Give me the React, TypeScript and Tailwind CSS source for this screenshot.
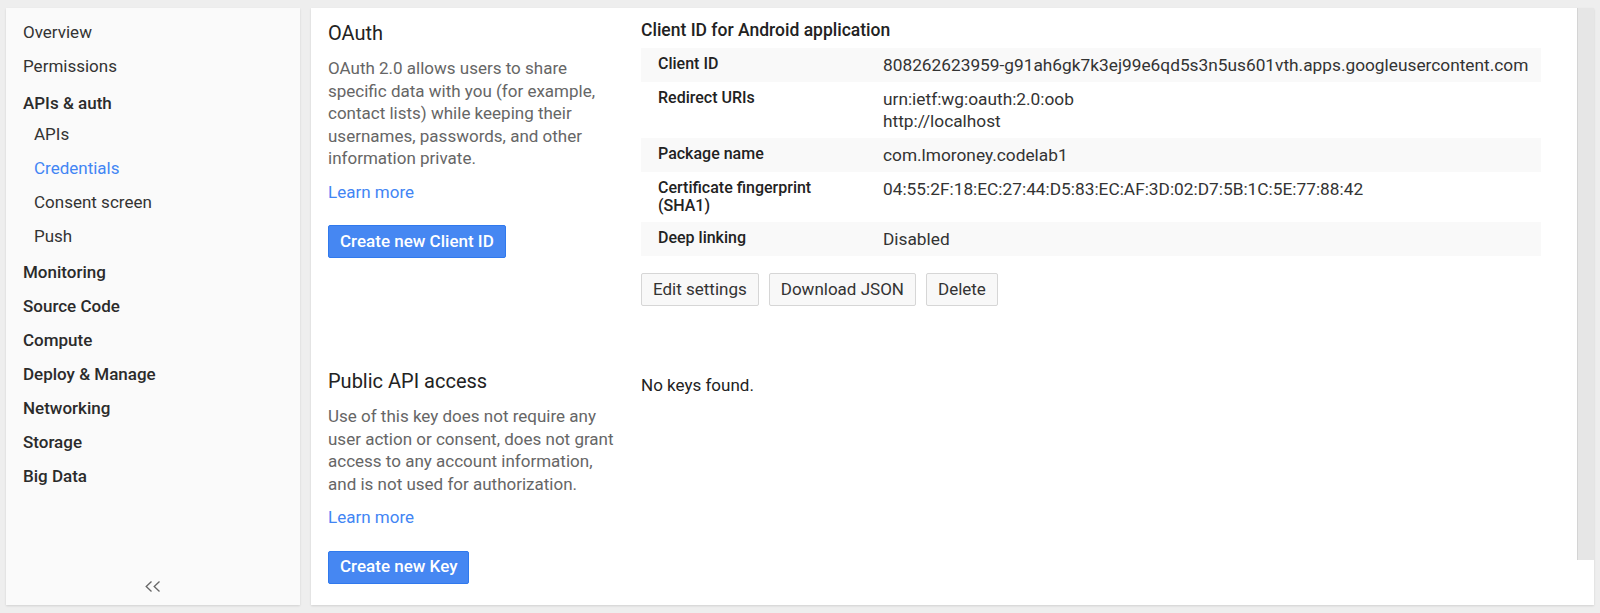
import React from 'react'

const navItems = [
  { label: 'Overview', kind: 'top' },
  { label: 'Permissions', kind: 'top' },
  { label: 'APIs & auth', kind: 'group' },
  { label: 'APIs', kind: 'sub' },
  { label: 'Credentials', kind: 'active' },
  { label: 'Consent screen', kind: 'sub' },
  { label: 'Push', kind: 'sub' },
  { label: 'Monitoring', kind: 'group' },
  { label: 'Source Code', kind: 'group' },
  { label: 'Compute', kind: 'group' },
  { label: 'Deploy & Manage', kind: 'group' },
  { label: 'Networking', kind: 'group' },
  { label: 'Storage', kind: 'group' },
  { label: 'Big Data', kind: 'group' },
]

const details = [
  { label: ['Client ID'], value: ['808262623959-g91ah6gk7k3ej99e6qd5s3n5us601vth.apps.googleusercontent.com'] },
  { label: ['Redirect URIs'], value: ['urn:ietf:wg:oauth:2.0:oob', 'http://localhost'] },
  { label: ['Package name'], value: ['com.lmoroney.codelab1'] },
  { label: ['Certificate fingerprint', '(SHA1)'], value: ['04:55:2F:18:EC:27:44:D5:83:EC:AF:3D:02:D7:5B:1C:5E:77:88:42'] },
  { label: ['Deep linking'], value: ['Disabled'] },
]

function navClass(kind: string) {
  if (kind === 'group') return 'pl-[17px] font-medium text-[#2b2b2b]'
  if (kind === 'sub') return 'pl-[28px] text-[#333]'
  if (kind === 'active') return 'pl-[28px] text-[#4285f4]'
  return 'pl-[17px] text-[#333]'
}

function navOffset(label: string) {
  if (label === 'APIs & auth') return 'mt-[3px]'
  if (label === 'APIs') return 'mt-[-3px]'
  if (label === 'Monitoring') return 'mt-[2px]'
  return ''
}

export default function App() {
  return (
    <div
      className="h-[613px] w-[1600px] bg-[#eeeeee] pt-[8px] pb-[8px] pl-[6px] pr-[6px] flex gap-[11px] overflow-hidden"
      style={{ fontFamily: 'Roboto, "Noto Sans", sans-serif' }}
    >
      {/* Sidebar */}
      <div className="w-[294px] bg-[#fafafa] shadow-[0_1px_2px_rgba(0,0,0,0.12)] flex flex-col">
        <div className="pt-[7px] flex flex-col">
          {navItems.map((item, i) => (
            <div
              key={i}
              className={`h-[34px] leading-[34px] text-[17px] cursor-pointer ${navClass(item.kind)} ${navOffset(item.label)}`}
            >
              {item.label}
            </div>
          ))}
        </div>
        <div className="mt-auto pb-[13px] flex justify-center">
          <svg width="16" height="11" viewBox="0 0 16 11" fill="none" stroke="#666" strokeWidth="1.3">
            <path d="M6.5 0.5 L1.2 5.5 L6.5 10.5" />
            <path d="M14.5 0.5 L9.2 5.5 L14.5 10.5" />
          </svg>
        </div>
      </div>

      {/* Main panel */}
      <div className="flex-1 bg-white shadow-[0_1px_2px_rgba(0,0,0,0.12)] flex">
        <div className="flex-1 pl-[17px] flex flex-col">
          {/* OAuth section */}
          <div className="flex">
            <div className="w-[300px] pt-[13px]">
              <h2 className="text-[20px] leading-[24px] text-[#222]">OAuth</h2>
              <p className="w-[290px] mt-[12px] text-[17px] leading-[22.5px] text-[#666]">
                OAuth 2.0 allows users to share specific data with you (for example, contact lists) while keeping their
                usernames, passwords, and other information private.
              </p>
              <a className="block mt-[11px] text-[17px] leading-[22.5px] text-[#4285f4] cursor-pointer">Learn more</a>
              <button className="mt-[22px] h-[33px] px-[11px] rounded-[2px] bg-[#4687f2] border border-[#3079ed] text-white text-[17px] font-medium">
                Create new Client ID
              </button>
            </div>
            <div className="ml-[13px] pt-[12px] w-[900px]">
              <h3 className="text-[17.5px] leading-[20px] font-medium text-[#222]">Client ID for Android application</h3>
              <div className="mt-[8px] flex flex-col">
                {details.map((row, i) => (
                  <div key={i} className={`flex ${i % 2 === 0 ? 'bg-[#f9f9f9]' : 'bg-white'}`}>
                    <div className="w-[242px] pl-[17px] py-[7px] text-[16px] leading-[18px] font-medium text-[#222]">
                      {row.label.map((l, j) => (
                        <div key={j}>{l}</div>
                      ))}
                    </div>
                    <div className="flex-1 py-[6px] text-[17.3px] leading-[22px] text-[#333]">
                      {row.value.map((v, j) => (
                        <div key={j}>{v}</div>
                      ))}
                    </div>
                  </div>
                ))}
              </div>
              <div className="mt-[17px] flex gap-[10px]">
                {['Edit settings', 'Download JSON', 'Delete'].map((b) => (
                  <button
                    key={b}
                    className="h-[33px] px-[11px] rounded-[2px] bg-[#f8f8f8] border border-[#d6d6d6] text-[17px] text-[#333]"
                  >
                    {b}
                  </button>
                ))}
              </div>
            </div>
          </div>

          {/* Public API access section */}
          <div className="flex mt-[63px]">
            <div className="w-[300px]">
              <h2 className="text-[20px] leading-[24px] text-[#222]">Public API access</h2>
              <p className="w-[290px] mt-[12px] text-[17px] leading-[22.5px] text-[#666]">
                Use of this key does not require any user action or consent, does not grant access to any account
                information, and is not used for authorization.
              </p>
              <a className="block mt-[11px] text-[17px] leading-[22.5px] text-[#4285f4] cursor-pointer">Learn more</a>
              <button className="mt-[22px] h-[33px] px-[11px] rounded-[2px] bg-[#4687f2] border border-[#3079ed] text-white text-[17px] font-medium">
                Create new Key
              </button>
            </div>
            <div className="ml-[13px] pt-[5px]">
              <p className="text-[17px] leading-[22px] text-[#222]">No keys found.</p>
            </div>
          </div>
        </div>

        {/* Scrollbar track */}
        <div className="w-[17px] h-[552px] bg-[#e6e6e6] border-l border-[#d4d4d4]" />
      </div>
    </div>
  )
}
